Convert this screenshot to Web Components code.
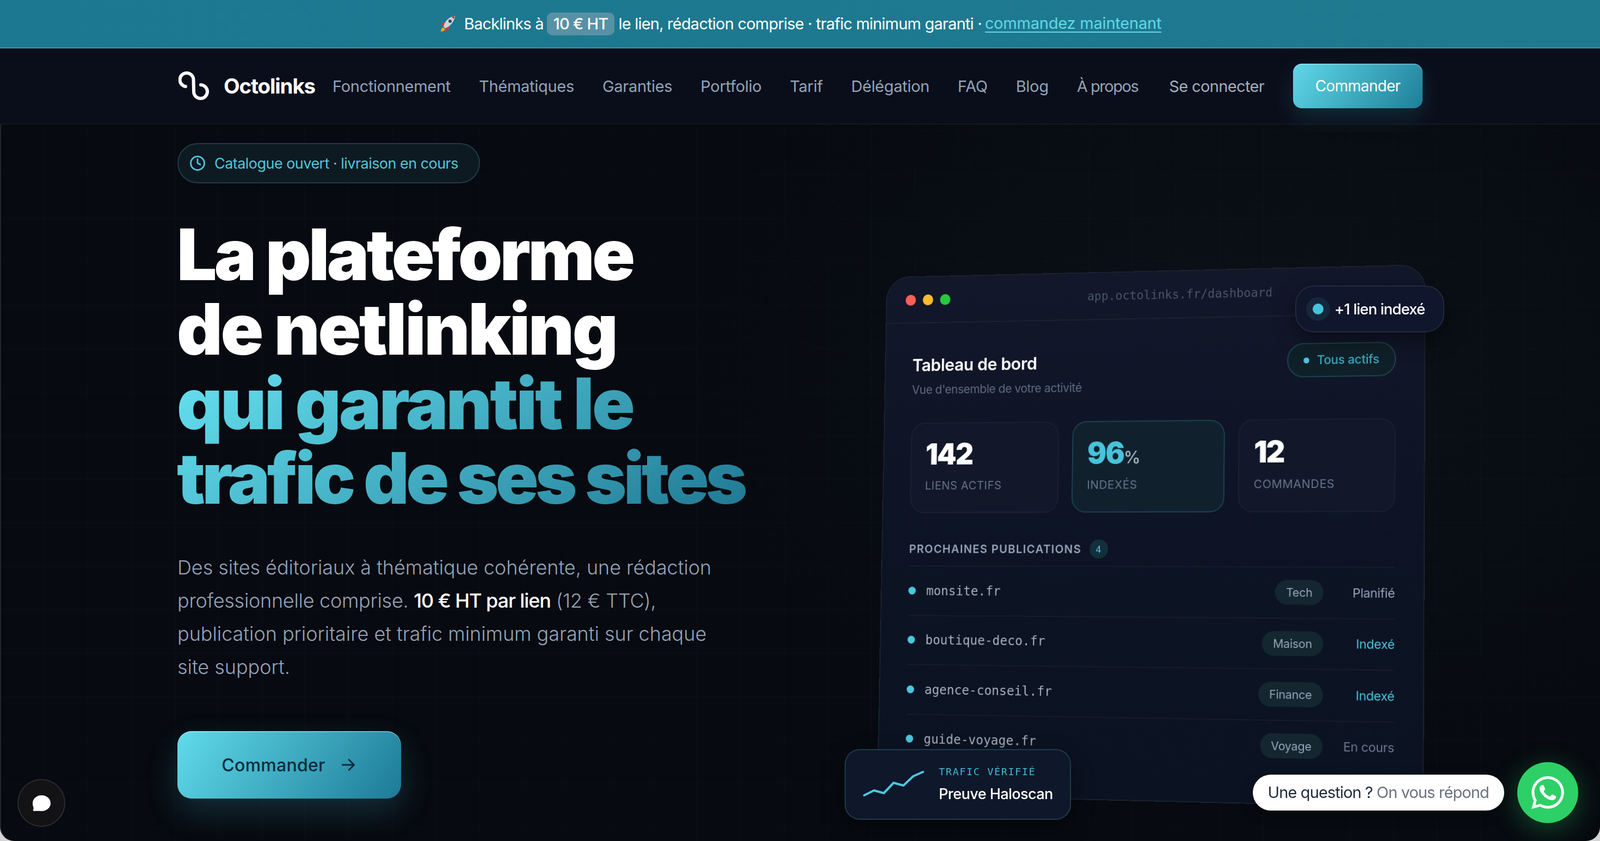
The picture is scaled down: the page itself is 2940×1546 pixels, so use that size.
<!DOCTYPE html>
<html lang="fr">
<head>
<meta charset="utf-8">
<title>Octolinks</title>
<style>
  html, body { margin: 0; height: 100%; background: #d4d4d4; overflow: hidden; }
  body { font-family: Inter, "Noto Sans", sans-serif; }
  app-frame { height: 1546px; }
</style>
</head>
<body>
<app-frame>
  <top-banner></top-banner>
  <site-nav></site-nav>
  <hero-section>
    <hero-copy slot="copy"></hero-copy>
    <app-window slot="visual">
      <stat-tile value="142" label="Liens actifs"></stat-tile>
      <stat-tile value="96" unit="%" label="Indexés" accent></stat-tile>
      <stat-tile value="12" label="Commandes"></stat-tile>
      <pub-row slot="rows" domain="monsite.fr" tag="Tech" status="Planifié"></pub-row>
      <pub-row slot="rows" domain="boutique-deco.fr" tag="Maison" status="Indexé" done></pub-row>
      <pub-row slot="rows" domain="agence-conseil.fr" tag="Finance" status="Indexé" done></pub-row>
      <pub-row slot="rows" domain="guide-voyage.fr" tag="Voyage" status="En cours" muted></pub-row>
    </app-window>
    <index-chip slot="visual"></index-chip>
    <traffic-chip slot="visual"></traffic-chip>
  </hero-section>
  <chat-launcher></chat-launcher>
  <whatsapp-widget></whatsapp-widget>
</app-frame>

<script>
// small helper, every component is just a shadow root + its own style
function mount(el, css, html) {
    const root = el.attachShadow({ mode: 'open' })
    root.innerHTML = `<style>${css}</style>${html}`
    return root
}

class AppFrame extends HTMLElement {
    connectedCallback() {
        mount(this, `
        :host {
            display: flex;
            flex-direction: column;
            position: relative;
            overflow: hidden;
            border-radius: 0 0 26px 26px;
            background:
                linear-gradient(rgba(255,255,255,.007) 2px, transparent 2px) 0 0 / 100% 80px,
                linear-gradient(90deg, rgba(255,255,255,.007) 2px, transparent 2px) 0 0 / 80px 100%,
                radial-gradient(1500px 1100px at 78% 45%, #0a1218 0%, #070a10 70%),
                #070a10;
            box-shadow: inset 2px 0 0 #23262c;
        }`, `<slot></slot>`)
    }
}

class TopBanner extends HTMLElement {
    connectedCallback() {
        mount(this, `
        :host {
            display: flex;
            align-items: center;
            justify-content: center;
            height: 87px;
            border-bottom: 2px solid #3b90a6;
            background: linear-gradient(90deg, #1b7890, #1f7a90);
            color: #fff;
            font-size: 29px;
            letter-spacing: -.027em;
            white-space: nowrap;
        }
        svg { margin-right: 15px; }
        .price {
            display: inline-flex;
            align-items: center;
            height: 42px;
            margin: 0 7px 0 6px;
            padding: 0 12px;
            border-radius: 10px;
            background: #5891a5;
            font-weight: 500;
        }
        a {
            margin-left: 6px;
            color: #62d8e8;
            text-decoration: none;
            border-bottom: 2px solid #62d8e8;
            line-height: 31px;
            letter-spacing: -.007em;
        }`, `
        <svg width="32" height="32" viewBox="0 0 32 32">
            <path d="M9 19l-6 2 5-8 5-1z" fill="#d8392b"/>
            <path d="M13 23l-2 7 8-5 1-5z" fill="#d8392b"/>
            <path d="M8 22c-3 2-4 5-4 8 3 0 6-1 8-4z" fill="#f5a623"/>
            <path d="M9 21C11 11 19 3 30 1c-1 11-9 20-18 23z" fill="#c9d3dc"/>
            <path d="M24 3l5-2c0 2-.5 4-1.500 6z" fill="#b8392c"/>
            <circle cx="21" cy="11" r="3" fill="#33475a"/>
        </svg>
        <span>Backlinks à</span><span class="price">10 € HT</span><span>le lien, rédaction comprise · trafic minimum garanti ·</span><a href="#">commandez maintenant</a>`)
    }
}

class SiteNav extends HTMLElement {
    connectedCallback() {
        const links = ['Fonctionnement', 'Thématiques', 'Garanties', 'Portfolio', 'Tarif', 'Délégation', 'FAQ', 'Blog', 'À propos']
        mount(this, `
        :host {
            display: flex;
            align-items: center;
            flex: none;
            height: 138px;
            padding: 0 326px 0 328px;
            border-bottom: 2px solid #14181f;
            background: #0a0e1a;
            color: #94a3b8;
            font-size: 29px;
            letter-spacing: -.01em;
            white-space: nowrap;
        }
        .logo { display: flex; align-items: center; gap: 27px; margin-right: 32px; color: #fff; font-size: 38.500px; font-weight: 700; letter-spacing: -.03em; }
        nav { display: flex; gap: 52px; }
        nav span:last-child { letter-spacing: -.05em; }
        .login { margin-left: auto; margin-right: 53px; color: #a3aebd; letter-spacing: -.022em; }
        .order {
            display: flex;
            align-items: center;
            justify-content: center;
            width: 238px;
            height: 82px;
            border-radius: 16px;
            background: linear-gradient(125deg, #5fd8e8, #1f7e98);
            box-shadow: inset 0 2px 0 rgba(255,255,255,.25), 0 16px 40px rgba(70,190,220,.16);
            color: #fff;
            font-size: 28px;
            font-weight: 400;
            letter-spacing: -.025em;
        }`, `
        <div class="logo">
            <svg width="56" height="56" viewBox="8 8 56 56" fill="none" stroke="#fff" stroke-width="6" stroke-linecap="round">
                <path d="M21 37A12.500 12.500 0 1 1 35.500 24L36 46A12.500 12.500 0 1 0 49 34"/>
            </svg>
            Octolinks
        </div>
        <nav>${links.map(l => `<span>${l}</span>`).join('')}</nav>
        <span class="login">Se connecter</span>
        <span class="order">Commander</span>`)
    }
}

class HeroSection extends HTMLElement {
    connectedCallback() {
        mount(this, `
        :host {
            display: grid;
            grid-template-columns: 1fr 1050px;
            flex: 1;
            padding: 0 322px 0 326px;
        }
        .visual { position: relative; padding-top: 253px; }`, `
        <div><slot name="copy"></slot></div>
        <div class="visual"><slot name="visual"></slot></div>`)
    }
}

class HeroCopy extends HTMLElement {
    connectedCallback() {
        mount(this, `
        :host { display: block; padding-top: 34px; }
        .status {
            display: inline-flex;
            align-items: center;
            gap: 16px;
            box-sizing: border-box;
            width: 556px;
            height: 74px;
            padding-left: 20px;
            border: 2px solid #1c3d49;
            border-radius: 37px;
            background: #0e1a22;
            color: #4fc8dc;
            font-size: 27px;
            letter-spacing: -.02em;
            white-space: nowrap;
        }
        h1 {
            margin: 62px 0 0 -1px;
            color: #fff;
            font-size: 130px;
            font-weight: 900;
            line-height: 137px;
            white-space: nowrap;
        }
        h1 span { display: block; }
        h1 .grad {
            background: linear-gradient(145deg, #62dcec 5%, #1d7590 90%);
            -webkit-background-clip: text;
            background-clip: text;
            color: transparent;
        }
        p {
            margin: 66px 0 0;
            color: #94a3b8;
            font-size: 36px;
            font-weight: 300;
            line-height: 61px;
            letter-spacing: -.001em;
            white-space: nowrap;
        }
        p .tight { letter-spacing: -.008em; }
        strong { color: #fff; font-weight: 500; letter-spacing: -.03em; }
        .cta {
            display: flex;
            align-items: center;
            justify-content: center;
            gap: 26px;
            width: 411px;
            height: 124px;
            margin-top: 87px;
            border-radius: 26px;
            background: linear-gradient(125deg, #60dbeb, #1d7a96);
            box-shadow: inset 0 2px 0 rgba(255,255,255,.3), 0 24px 60px rgba(70,190,220,.2);
            color: #0b2c3a;
            font-size: 32px;
            font-weight: 500;
            letter-spacing: .008em;
        }`, `
        <div class="status">
            <svg width="30" height="30" viewBox="0 0 24 24" fill="none" stroke="currentColor" stroke-width="2.200" stroke-linecap="round"><circle cx="12" cy="12" r="10"/><path d="M12 6v6l4 2"/></svg>
            Catalogue ouvert · livraison en cours
        </div>
        <h1><span style="letter-spacing:-4.700px">La plateforme</span><span style="letter-spacing:-3.400px">de netlinking</span><div class="grad"><span style="letter-spacing:-3.800px">qui garantit le</span><span style="letter-spacing:-5.600px">trafic de ses sites</span></div></h1>
        <p>Des sites éditoriaux à thématique cohérente, une rédaction<br><span class="tight">professionnelle comprise. <strong>10 € HT par lien</strong> (12 € TTC),</span><br>publication prioritaire et trafic minimum garanti sur chaque<br>site support.</p>
        <div class="cta">Commander
            <svg width="32" height="32" viewBox="0 0 24 24" fill="none" stroke="currentColor" stroke-width="2.200" stroke-linecap="round" stroke-linejoin="round"><path d="M4 12h16M13 5l7 7-7 7"/></svg>
        </div>`)
    }
}

class AppWindow extends HTMLElement {
    connectedCallback() {
        mount(this, `
        :host {
            display: block;
            box-sizing: border-box;
            height: 1000px;
            margin-left: -4px;
            border: 2px solid #1b2130;
            border-radius: 48px;
            background: linear-gradient(#12172a, #0c1323 60%, #0b1221);
            transform: perspective(2400px) rotateY(-6.500deg) rotateX(2deg);
            transform-origin: 100% 50%;
            overflow: hidden;
        }
        .bar {
            display: flex;
            align-items: center;
            gap: 14px;
            height: 88px;
            padding: 0 38px;
            border-bottom: 2px solid #1c2231;
        }
        .bar i { width: 21px; height: 21px; border-radius: 50%; }
        .url { margin-left: auto; margin-right: 249px; color: #4b5668; font: 23px "DejaVu Sans Mono", monospace; }
        .body { padding: 61px 53px 0 54px; }
        .head { display: flex; justify-content: space-between; align-items: flex-start; }
        h2 { margin: 0; color: #fff; font-size: 33px; font-weight: 600; letter-spacing: -.012em; line-height: 40px; }
        small { display: block; margin-top: 14px; color: #5d6a7e; font-size: 23px; letter-spacing: -.022em; }
        .live {
            display: flex;
            align-items: center;
            gap: 14px;
            height: 60px;
            padding: 0 29px;
            margin-top: -10px;
            border: 2px solid #1d4351;
            border-radius: 31px;
            background: #102029;
            color: #3ba9bf;
            font-size: 23px;
            font-weight: 500;
            letter-spacing: -.01em;
        }
        .live i { width: 11px; height: 11px; border-radius: 50%; background: #4ac6dd; }
        .tiles { display: grid; grid-template-columns: repeat(3, 1fr); gap: 26px; margin-top: 50px; }
        .sec {
            display: flex;
            align-items: center;
            gap: 16px;
            margin-top: 51px;
            padding-bottom: 14px;
            border-bottom: 2px solid #171c2a;
            color: #94a3b8;
            font-size: 22px;
            font-weight: 600;
            letter-spacing: 1.400px;
        }
        .sec b {
            display: grid;
            place-items: center;
            width: 36px;
            height: 36px;
            border-radius: 50%;
            background: #12303c;
            color: #4ac6dd;
            font: 18px "DejaVu Sans Mono", monospace;
        }`, `
        <div class="bar">
            <i style="background:#ff5f57"></i><i style="background:#febc2e"></i><i style="background:#28c840"></i>
            <span class="url">app.octolinks.fr/dashboard</span>
        </div>
        <div class="body">
            <div class="head">
                <div><h2>Tableau de bord</h2><small>Vue d'ensemble de votre activité</small></div>
                <div class="live"><i></i>Tous actifs</div>
            </div>
            <div class="tiles"><slot></slot></div>
            <div class="sec">PROCHAINES PUBLICATIONS <b>4</b></div>
            <slot name="rows"></slot>
        </div>`)
    }
}

class StatTile extends HTMLElement {
    connectedCallback() {
        const accent = this.hasAttribute('accent')
        const unit = this.getAttribute('unit')
        mount(this, `
        :host {
            display: block;
            height: 174px;
            box-sizing: border-box;
            padding: 26px 28px 0;
            border: 2px solid ${accent ? '#1c4250' : '#1b2030'};
            border-radius: 28px;
            background: ${accent ? '#10212d' : '#12172a'};
        }
        .num { height: 66px; color: ${accent ? '#46c4dc' : '#fff'}; font-size: 56px; font-weight: 900; line-height: 66px; letter-spacing: -.035em; }
        .num sub { font-size: 32px; font-weight: 600; line-height: 0; vertical-align: baseline; letter-spacing: 0; color: #9ab0c0; }
        .lab { margin-top: 14px; color: #66748a; font-size: 22px; letter-spacing: .03em; text-transform: uppercase; }`, `
        <div class="num">${this.getAttribute('value')}${unit ? `<sub>${unit}</sub>` : ''}</div>
        <div class="lab">${this.getAttribute('label')}</div>`)
    }
}

class PubRow extends HTMLElement {
    connectedCallback() {
        const done = this.hasAttribute('done')
        const muted = this.hasAttribute('muted')
        mount(this, `
        :host {
            display: grid;
            grid-template-columns: 1fr auto 133px;
            align-items: center;
            height: 92.500px;
            border-bottom: 2px solid #171c2a;
        }
        :host(:last-child) { border-bottom: 0; }
        .dom { display: flex; align-items: center; gap: 21px; color: #a6b0bf; font: 24.800px "DejaVu Sans Mono", monospace; }
        .dom i { width: 15px; height: 15px; border-radius: 50%; background: #4ac6dd; }
        .tag {
            padding: 0 21px;
            border-radius: 23px;
            background: #14262f;
            color: #94a3b8;
            font-size: 22px;
            line-height: 46px;
            letter-spacing: -.012em;
        }
        .st { text-align: right; color: ${done ? '#46c4dc' : muted ? '#6b7789' : '#94a3b8'}; font-size: 23.500px; letter-spacing: -.015em; }`, `
        <div class="dom"><i></i>${this.getAttribute('domain')}</div>
        <span class="tag">${this.getAttribute('tag')}</span>
        <span class="st">${this.getAttribute('status')}</span>`)
    }
}

class IndexChip extends HTMLElement {
    connectedCallback() {
        mount(this, `
        :host {
            position: absolute;
            top: 296px;
            right: -36px;
            display: flex;
            align-items: center;
            gap: 20px;
            box-sizing: border-box;
            width: 274px;
            height: 86px;
            padding-left: 30px;
            border: 2px solid #232a3d;
            border-radius: 34px;
            background: #10162b;
            box-shadow: 0 14px 40px rgba(0,0,0,.45);
            color: #fff;
            font-size: 27.500px;
            font-weight: 500;
            letter-spacing: -.03em;
            white-space: nowrap;
        }
        i { width: 20px; height: 20px; border-radius: 50%; background: #46c4dc; box-shadow: 0 0 0 12px rgba(70,196,220,.1); }`, `
        <i></i>+1 lien indexé`)
    }
}

class TrafficChip extends HTMLElement {
    connectedCallback() {
        mount(this, `
        :host {
            position: absolute;
            top: 1148px;
            left: -16px;
            display: flex;
            align-items: center;
            gap: 27px;
            box-sizing: border-box;
            width: 416px;
            height: 130px;
            padding-left: 32px;
            border: 2px solid #1c3d4b;
            border-radius: 28px;
            background: #0f172a;
            box-shadow: 0 14px 40px rgba(0,0,0,.45);
            white-space: nowrap;
        }
        .k { color: #3fb9d2; font: 18.500px "DejaVu Sans Mono", monospace; letter-spacing: 1.600px; }
        .v { margin-top: 14px; color: #fff; font-size: 27px; font-weight: 500; letter-spacing: -.02em; }`, `
        <svg width="112" height="52" viewBox="0 0 112 52" fill="none" stroke="#4cc9e0" stroke-width="4" stroke-linecap="round" stroke-linejoin="round"><path d="M2 46L20 37 38 42 56 23 74 28 92 11 110 3"/></svg>
        <div><div class="k">TRAFIC VÉRIFIÉ</div><div class="v">Preuve Haloscan</div></div>`)
    }
}

class ChatLauncher extends HTMLElement {
    connectedCallback() {
        mount(this, `
        :host {
            position: absolute;
            left: 32px;
            bottom: 26px;
            display: grid;
            place-items: center;
            box-sizing: border-box;
            width: 88px;
            height: 88px;
            border: 2px solid #2c2c2f;
            border-radius: 50%;
            background: #131316;
        }`, `
        <svg width="33" height="29" viewBox="0 0 32 28" fill="#fff"><path d="M16 0C25 0 32 6 32 14 32 22 25 28 16 28 13 28 10 27.500 3 28 1 28 0 27 1 25 2 24 1.500 22 1 20 0 18 0 16 0 14 0 6 7 0 16 0Z"/></svg>`)
    }
}

class WhatsappWidget extends HTMLElement {
    connectedCallback() {
        mount(this, `
        :host {
            position: absolute;
            right: 40px;
            bottom: 33px;
            display: flex;
            align-items: center;
            gap: 24px;
            white-space: nowrap;
        }
        .bubble {
            height: 66px;
            padding: 0 28px;
            border-radius: 33px;
            background: #fff;
            color: #1e293b;
            font-size: 29px;
            font-weight: 400;
            line-height: 66px;
            letter-spacing: -.03em;
            box-shadow: 0 8px 24px rgba(0,0,0,.3);
        }
        .bubble span { color: #6b7280; font-weight: 400; }
        .btn {
            display: grid;
            place-items: center;
            width: 112px;
            height: 112px;
            border-radius: 50%;
            background: #2dd066;
            box-shadow: 0 10px 50px rgba(45,208,102,.32);
        }`, `
        <div class="bubble">Une question ? <span>On vous répond</span></div>
        <div class="btn"><svg width="60" height="60" viewBox="0 0 24 24" fill="#fff"><path d="M17.472 14.382c-.297-.149-1.758-.867-2.030-.967-.273-.099-.471-.148-.670.150-.197.297-.767.966-.940 1.164-.173.199-.347.223-.644.075-.297-.150-1.255-.463-2.390-1.475-.883-.788-1.480-1.761-1.653-2.059-.173-.297-.018-.458.130-.606.134-.133.298-.347.446-.520.149-.174.198-.298.298-.497.099-.198.050-.371-.025-.520-.075-.149-.669-1.612-.916-2.207-.242-.579-.487-.500-.669-.510-.173-.008-.371-.010-.570-.010-.198 0-.520.074-.792.372-.272.297-1.040 1.016-1.040 2.479 0 1.462 1.065 2.875 1.213 3.074.149.198 2.096 3.200 5.077 4.487.709.306 1.262.489 1.694.625.712.227 1.360.195 1.871.118.571-.085 1.758-.719 2.006-1.413.248-.694.248-1.289.173-1.413-.074-.124-.272-.198-.570-.347m-5.421 7.403h-.004a9.870 9.870 0 01-5.031-1.378l-.361-.214-3.741.982.998-3.648-.235-.374a9.860 9.860 0 01-1.510-5.260c.001-5.450 4.436-9.884 9.888-9.884 2.640 0 5.122 1.030 6.988 2.898a9.825 9.825 0 012.893 6.994c-.003 5.450-4.437 9.884-9.885 9.884m8.413-18.297A11.815 11.815 0 0012.050 0C5.495 0 .160 5.335.157 11.892c0 2.096.547 4.142 1.588 5.945L.057 24l6.305-1.654a11.882 11.882 0 005.683 1.448h.005c6.554 0 11.890-5.335 11.893-11.893a11.821 11.821 0 00-3.480-8.413z"/></svg></div>`)
    }
}

customElements.define('app-frame', AppFrame)
customElements.define('top-banner', TopBanner)
customElements.define('site-nav', SiteNav)
customElements.define('hero-section', HeroSection)
customElements.define('hero-copy', HeroCopy)
customElements.define('app-window', AppWindow)
customElements.define('stat-tile', StatTile)
customElements.define('pub-row', PubRow)
customElements.define('index-chip', IndexChip)
customElements.define('traffic-chip', TrafficChip)
customElements.define('chat-launcher', ChatLauncher)
customElements.define('whatsapp-widget', WhatsappWidget)
</script>
</body>
</html>
